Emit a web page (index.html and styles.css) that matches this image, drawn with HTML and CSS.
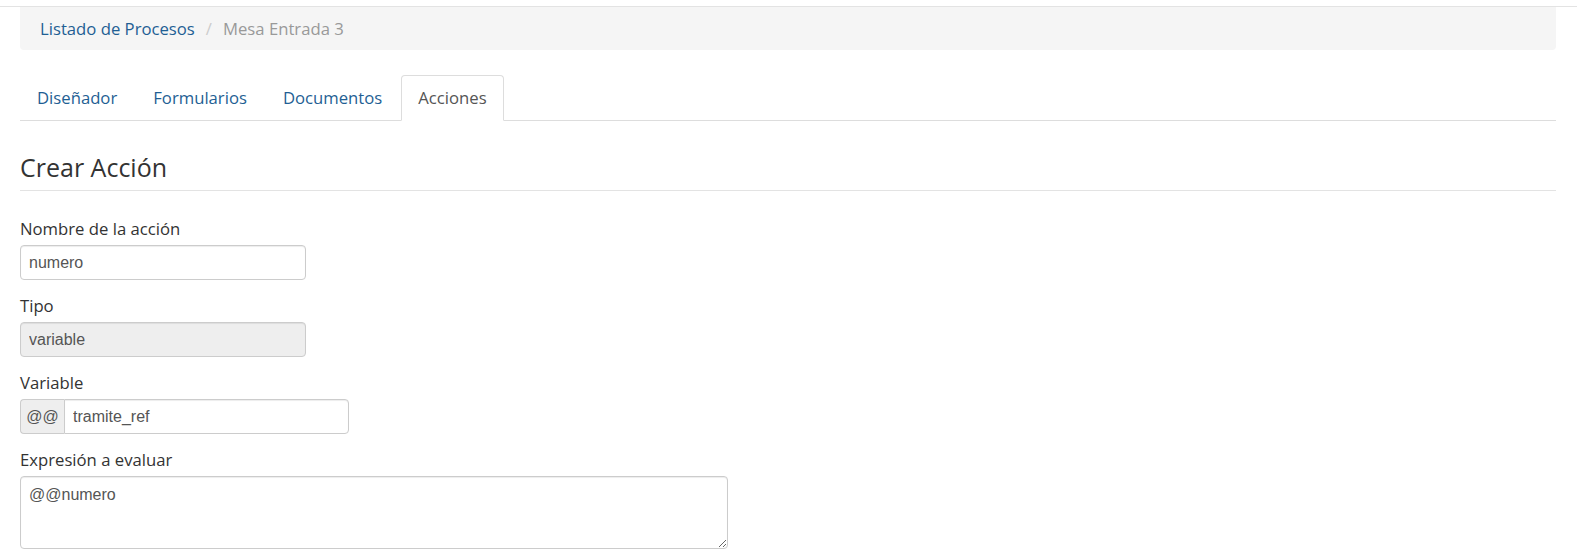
FILE: index.html
```html
<!DOCTYPE html>
<html lang="es">
<head>
<meta charset="utf-8">
<title>Crear Acción</title>
<link rel="stylesheet" href="styles.css">
</head>
<body>
<div class="topbar"></div>
<div class="container">
  <ol class="breadcrumb">
    <li><a href="#">Listado de Procesos</a></li>
    <li class="sep">/</li>
    <li class="active">Mesa Entrada 3</li>
  </ol>
  <ul class="nav-tabs">
    <li><a href="#">Diseñador</a></li>
    <li><a href="#">Formularios</a></li>
    <li><a href="#">Documentos</a></li>
    <li class="active"><a href="#">Acciones</a></li>
  </ul>
  <h2 class="page-title">Crear Acción</h2>
  <form class="form">
    <div class="form-group">
      <label>Nombre de la acción</label>
      <input class="form-control w-name" type="text" value="numero">
    </div>
    <div class="form-group">
      <label>Tipo</label>
      <input class="form-control w-name" type="text" value="variable" disabled>
    </div>
    <div class="form-group">
      <label>Variable</label>
      <div class="input-group">
        <span class="addon">@@</span>
        <input class="form-control grp" type="text" value="tramite_ref">
      </div>
    </div>
    <div class="form-group">
      <label>Expresión a evaluar</label>
      <textarea class="form-control w-area">@@numero</textarea>
    </div>
  </form>
</div>
</body>
</html>
```
FILE: styles.css
```css
* { box-sizing: border-box; }
html, body { margin: 0; padding: 0; background: #fff; }
body {
  font-family: "Open Sans", "Liberation Sans", sans-serif;
  font-size: 16.7px;
  color: #333;
}
a { color: #1f5f94; text-decoration: none; }

.topbar {
  height: 7px;
  border-bottom: 1px solid #e3e3e3;
}
.container {
  padding: 0 21px 0 20px;
}

.breadcrumb {
  list-style: none;
  margin: 0;
  padding: 11px 20px;
  height: 43px;
  background: #f5f5f5;
  border-radius: 0 0 4px 4px;
  display: flex;
  line-height: 21px;
  font-size: 16.7px;
}
.breadcrumb .sep { color: #ccc; padding: 0 11px; }
.breadcrumb .active { color: #999; }

.nav-tabs {
  list-style: none;
  margin: 25px 0 0 0;
  padding: 0;
  display: flex;
  border-bottom: 1px solid #ddd;
}
.nav-tabs li { margin-bottom: -1px; margin-right: 2px; }
.nav-tabs a {
  display: block;
  padding: 10px 16px 10px 16px;
  line-height: 24px;
  border: 1px solid transparent;
  border-radius: 4px 4px 0 0;
  font-size: 16.7px;
}
.nav-tabs .active a {
  color: #555;
  background: #fff;
  border-color: #ddd #ddd transparent #ddd;
}

.page-title {
  margin: 31px 0 28px 0;
  padding-bottom: 8px;
  border-bottom: 1px solid #e3e3e3;
  font-size: 25px;
  font-weight: 400;
  line-height: 30px;
  color: #333;
}

.form-group { margin-bottom: 16px; }
.form-group label {
  display: block;
  line-height: 20px;
  margin-bottom: 6px;
  font-size: 16.7px;
  font-weight: 400;
}
.form-control {
  display: block;
  height: 35px;
  padding: 6px 8px;
  font-family: "Liberation Sans", Arial, sans-serif;
  font-size: 16px;
  color: #555;
  background: #fff;
  border: 1px solid #ccc;
  border-radius: 4px;
  box-shadow: inset 0 1px 1px rgba(0,0,0,.075);
  outline: none;
}
.form-control:disabled { background: #eee; opacity: 1; color: #555; }
.w-name { width: 286px; }
.w-area { width: 708px; height: 73px; padding: 8px; line-height: 20px; resize: vertical; }

.input-group { display: flex; width: 329px; }
.addon {
  width: 44px;
  height: 35px;
  display: flex;
  align-items: center;
  justify-content: center;
  font-family: "Liberation Sans", Arial, sans-serif;
  font-size: 16px;
  color: #555;
  background: #eee;
  border: 1px solid #ccc;
  border-right: 0;
  border-radius: 4px 0 0 4px;
}
.input-group .grp { flex: 1; border-radius: 0 4px 4px 0; }
```
